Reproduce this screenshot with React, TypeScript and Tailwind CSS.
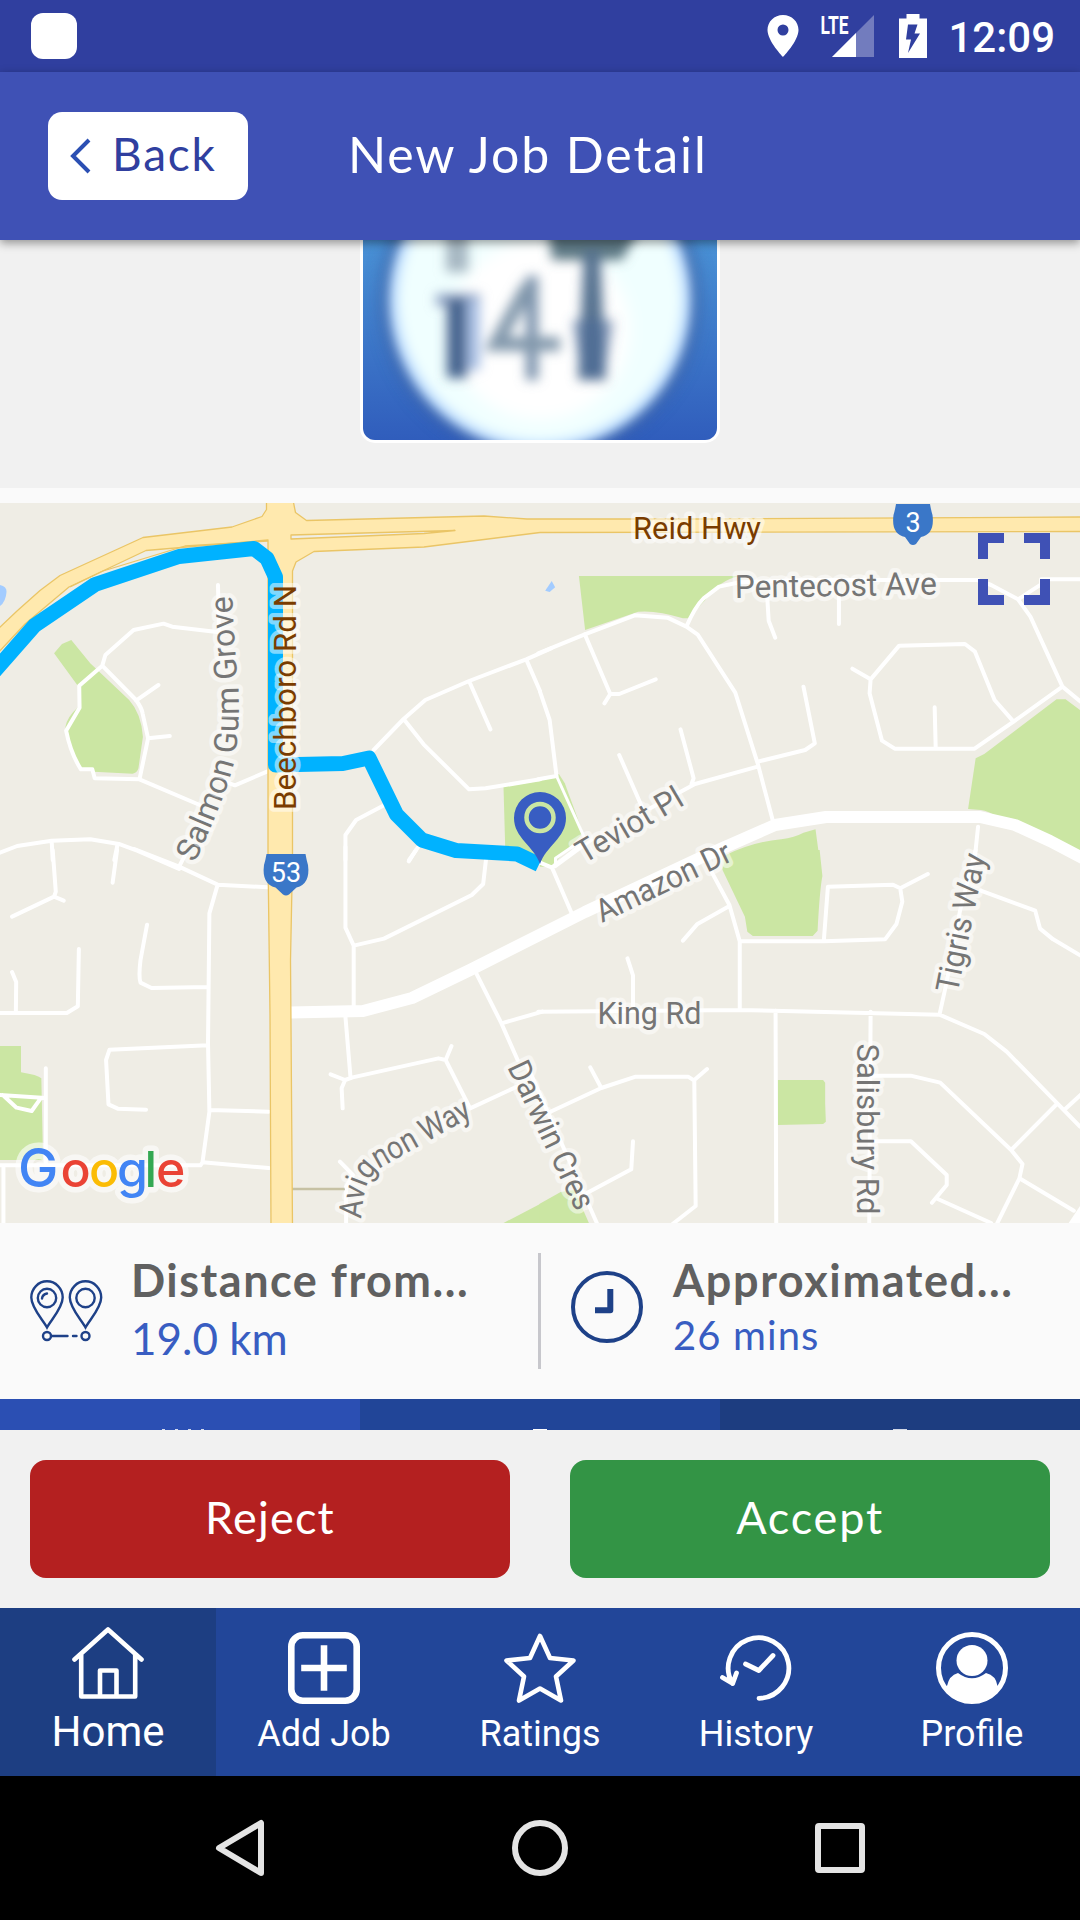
import React from "react";

const GREEN = "#cbe6a3";

function StatusBar() {
  return (
    <div className="flex h-[72px] items-center bg-[#303f9f] pl-[31px] pr-[25px]">
      <div className="h-[46px] w-[46px] rounded-[12px] bg-white" />
      <div className="ml-auto flex items-center">
        <svg width="32" height="42" viewBox="0 0 32 42" className="mr-[21px]">
          <path
            fill="#fff"
            fillRule="evenodd"
            d="M16 0C7.2 0 0.5 6.700 0.500 15C.500 26 16 42 16 42S31.500 26 31.500 15C31.500 6.700 24.800 0 16 0ZM16 9.500A5.500 5.500 0 1 1 16 20.500A5.500 5.500 0 1 1 16 9.500Z"
          />
        </svg>
        <svg width="54" height="44" viewBox="820 14 54 44" className="mr-[25px] overflow-visible">
          <path d="M874 15V57H832Z" fill="#fff" fillOpacity=".32" />
          <path d="M856 33V57H832Z" fill="#fff" />
          <path d="M820 14H849V36H820Z" fill="#303f9f" />
          <text x="820.5" y="34" fontFamily="Roboto" fontWeight="700" fontSize="26.500" textLength="28" lengthAdjust="spacingAndGlyphs" fill="#fff">
            LTE
          </text>
        </svg>
        <svg width="28" height="44" viewBox="0 0 28 44" className="mr-[21px]">
          <path d="M7.500 0H20.500V4.500H28V44H0V4.500H7.500Z" fill="#fff" />
          <path d="M18.500 10.500L9 10.500L7 25.500H12L9 39L21 19.500H15.500Z" fill="#303f9f" />
        </svg>
        <span className="pt-[4px] font-[Roboto] text-[42px] font-medium leading-[48px] text-white">12:09</span>
      </div>
    </div>
  );
}

function Header() {
  return (
    <header className="relative z-10 flex h-[168px] items-center bg-[#3f51b5] pl-[48px] shadow-[0_3px_9px_rgba(0,0,0,0.4)]">
      <button className="flex h-[88px] w-[200px] items-center rounded-[14px] bg-white pl-[22px] font-[Lato]">
        <svg width="22" height="38" viewBox="0 0 22 38">
          <path d="M19 3L3 19L19 35" fill="none" stroke="#2b4fb3" strokeWidth="4" />
        </svg>
        <span className="-mt-[4px] ml-[20px] text-[46px] leading-[60px] tracking-[1.800px] text-[#303f9f]">Back</span>
      </button>
      <h1 className="-mt-[4px] ml-[100px] whitespace-nowrap font-[Lato] text-[50px] leading-[60px] tracking-[1.900px] text-white">
        New Job Detail
      </h1>
    </header>
  );
}

function JobPhoto() {
  return (
    <div className="flex h-[248px] justify-center bg-[#f1f1f1]">
      <div className="h-[203px] w-[360px] overflow-hidden rounded-b-[15px] border-x-[3px] border-b-[3px] border-white">
        <svg width="354" height="200" viewBox="363 240 354 200">
          <defs>
            <linearGradient id="sky" x1="0" y1="0" x2="0" y2="1">
              <stop offset="0" stopColor="#4a92d6" />
              <stop offset="1" stopColor="#305dbc" />
            </linearGradient>
            <filter id="soft" x="-20%" y="-20%" width="140%" height="140%">
              <feGaussianBlur stdDeviation="6" />
            </filter>
            <filter id="edge" x="-20%" y="-20%" width="140%" height="140%">
              <feGaussianBlur stdDeviation="8" />
            </filter>
          </defs>
          <rect x="363" y="240" width="354" height="200" fill="url(#sky)" />
          <circle cx="540" cy="298" r="160" fill="#3d62a2" opacity=".7" filter="url(#edge)" />
          <circle cx="540" cy="300" r="151" fill="#bcdcff" filter="url(#soft)" />
          <circle cx="540" cy="300" r="142" fill="#f0ffff" filter="url(#soft)" />
          <circle cx="540" cy="330" r="90" fill="#ffffff" filter="url(#edge)" />
          <g filter="url(#soft)">
            <path d="M446 225H468V272H446Z" fill="#93a5b3" opacity=".8" />
            <path d="M436 294H480V306H436Z" fill="#8fa3c4" />
            <path d="M447 298H467V378H447Z" fill="#45638e" />
            <path d="M467 300H480V370H467Z" fill="#a9c0e4" />
            <path d="M532 276V380" stroke="#7890aa" strokeWidth="12" />
            <path d="M528 286L496 344H560" stroke="#8298ac" strokeWidth="14" fill="none" />
            <path d="M548 228H640L622 260H552Z" fill="#5d7884" />
            <path d="M584 250H600L606 380H578Z" fill="#54718f" />
            <path d="M572 320H614L604 378H582Z" fill="#4d6b97" opacity=".6" />
          </g>
        </svg>
      </div>
    </div>
  );
}

function Shield({ x, y, w, h, label }: { x: number; y: number; w: number; h: number; label: string }) {
  return (
    <g transform={`translate(${x} ${y})`}>
      <path
        d={`M3 0H${w - 3}Q${w - 2} 6 ${w - 0.5} 11Q${w + 2} 30 ${w - 12} ${h - 8}L${w / 2 + 3} ${h - 1}Q${w / 2} ${h + 1} ${w / 2 - 3} ${h - 1}L12 ${h - 8}Q-2 30 .5 11Q2 6 3 0Z`}
        fill="#3a77c8"
      />
      <text x={w / 2} y="27.500" textAnchor="middle" fontSize="27" fontFamily="Roboto" fill="#fff">
        {label}
      </text>
    </g>
  );
}

type LabelProps = { x: number; y: number; angle?: number; length: number; brown?: boolean; children: string };

function StreetLabel({ x, y, angle = 0, length, brown, children }: LabelProps) {
  return (
    <text
      transform={`translate(${x} ${y}) rotate(${angle})`}
      textLength={length}
      lengthAdjust="spacingAndGlyphs"
      fill={brown ? "#7a3c00" : "#757575"}
      stroke="#fff"
      strokeOpacity=".5"
      strokeWidth="9"
      strokeLinejoin="round"
      paintOrder="stroke"
    >
      {children}
    </text>
  );
}

function GoogleMark() {
  return (
    <g fontFamily="Inter" fontWeight="500" fontSize="50">
      <text y="1187" fill="#fff" stroke="#fff" strokeWidth="11" strokeLinejoin="round" opacity=".6">
        <tspan x="18" fontSize="54">G</tspan>
        <tspan x="60.500">o</tspan>
        <tspan x="89">o</tspan>
        <tspan x="117">g</tspan>
        <tspan x="144.500">l</tspan>
        <tspan x="156">e</tspan>
      </text>
      <text y="1187">
        <tspan x="18" fontSize="54" fill="#4285f4">G</tspan>
        <tspan x="60.500" fill="#ea4335">o</tspan>
        <tspan x="89" fill="#fbbc05">o</tspan>
        <tspan x="117" fill="#4285f4">g</tspan>
        <tspan x="144.500" fill="#34a853">l</tspan>
        <tspan x="156" fill="#ea4335">e</tspan>
      </text>
    </g>
  );
}

function JobMap() {
  return (
    <svg className="block" width="1080" height="720" viewBox="0 503 1080 720" fontFamily="Roboto" fontSize="32">
      <defs>
        <path id="salmon" d="M195 863C209 832 228 790 235 758C239 735 240 700 237 672C235 650 233 620 232 580" />
        <path id="avignon" d="M361 1219C364 1190 366 1176 382 1167L484 1110" />
      </defs>
      <rect x="0" y="503" width="1080" height="720" fill="#efede5" />

      <g transform="translate(0 490) scale(.34439 .33333)" fill={GREEN}>
        <path d="M157 490L180 462L207 450L262 520L375 630Q410 670 415 740L402 835Q398 850 385 851L272 845L268 838H232Q190 740 190 710Q195 680 228 650V590Z" />
        <path d="M1462 890L1568 872V1110H1468Z" />
        <path d="M0 285Q20 290 19 305Q17 335 0 348Z" fill="#a3ccff" />
      </g>
      <g transform="translate(540 490) scale(.34439 .33333)" fill={GREEN}>
        <path d="M113 258H580Q520 270 480 330L430 385H415Q340 360 285 365L131 420Z" />
        <path d="M0 870L55 852L72 880L125 1030L30 1130H0Z" />
        <path d="M1243 957L1265 805L1290 792L1500 628H1526L1575 665V1095L1480 1045L1340 990Q1300 960 1280 960Z" />
        <path d="M540 1095Q620 1055 700 1048Q740 1042 765 1028L800 1018L812 1110H540Z" />
        <path d="M15 302L34 273L44 292L28 306Z" fill="#a3ccff" />
      </g>
      <g transform="translate(0 850) scale(.34439 .33333)" fill={GREEN}>
        <path d="M0 588H61V667Q110 675 120 685L125 930H0Z" />
        <path d="M1462 1119L1568 1062L1570 1119Z" />
      </g>
      <g transform="translate(540 850) scale(.34439 .33333)" fill={GREEN}>
        <path d="M530 20L590 0H812L820 78Q812 120 806 242L792 258H618L602 245L595 200L530 60Z" />
        <path d="M690 690H822L828 698V760L830 815L822 822L690 825Z" />
        <path d="M-2 1062L60 1026L100 1020L142 1119H-2Z" />
      </g>

      <g fill="none" stroke="#fff" strokeWidth="4" strokeLinecap="round" strokeLinejoin="round">
        <g transform="translate(0 490) scale(.34439 .33333)">
          <path vectorEffect="non-scaling-stroke" d="M633 285L636 427L500 410L475 401L388 420L306 495L297 527L230 587L231 653L192 722Q205 790 235 838H268L275 865L405 868L580 945M297 527L395 630Q412 655 414 670L430 745L405 868M395 632L460 585M430 745L493 738M640 870L682 886L775 845" />
          <path vectorEffect="non-scaling-stroke" d="M-10 1092L50 1068L150 1052L262 1048L345 1062L400 1083L520 1137M150 1052L153 1110M341 1065L332 1110" />
          <path vectorEffect="non-scaling-stroke" d="M1085 780L1172 687L1235 630L1362 573L1528 508L1600 475M1362 573L1424 718M1172 687L1230 763L1362 898L1410 895L1568 868M1528 508L1568 603M1115 946L1034 990L1003 1035V1110M1215 1070L1188 1110" />
        </g>
        <g transform="translate(540 490) scale(.34439 .33333)">
          <path vectorEffect="non-scaling-stroke" d="M-5 490L130 433L275 376L370 383L425 410L458 434L567 608L632 820L678 1000M425 410Q450 350 475 325L520 290L580 277L780 270H1270L1310 285L1388 328L1455 283V268H1575M1388 328L1424 380L1517 590L1375 695L1262 776H1030L993 752L957 610L960 568L1043 467L1234 462L1263 485L1320 630L1375 695M1517 590L1570 635M960 568L907 536M1146 652L1149 775" />
          <path vectorEffect="non-scaling-stroke" d="M130 433L204 612H230L336 568M204 612L187 640M0 605L28 690L48 858L-5 868M660 325L664 392L683 443M868 310V402M765 590L798 760L770 780L632 815M632 830L450 882L320 955M408 718L446 865L440 882M230 795L300 960M1272 1010L1262 1110" />
          <path vectorEffect="non-scaling-stroke" strokeWidth="3" d="M48 858L130 1045L45 1105V1130L150 1050" />
        </g>
        <g transform="translate(0 850) scale(.34439 .33333)">
          <path vectorEffect="non-scaling-stroke" d="M390 -3L520 50L632 104L777 112M520 50L540 10M153 0L162 125L157 140L35 200M157 140L185 152M340 0L327 98M632 104L608 190L604 580L608 785L588 937L582 946H0M588 937L780 954M10 946V1125M608 780L780 785M604 586L318 599L308 630L315 763L342 776L424 779M604 411L440 414L408 398Q402 380 408 330L427 224M-5 489H194L226 469L229 297M46 489L47 396L35 366M133 655V940M0 735L132 744M8 735L48 773L92 783L118 745" />
          <path vectorEffect="non-scaling-stroke" d="M1003 -10V233L1027 287L1115 266L1370 135L1403 102L1411 30M1027 287V470M1208 0L1187 34M1383 370L1456 520L1503 630M1456 520L1575 485M1003 500L1018 685M960 673L1002 690L1024 682L1273 625L1294 630L1365 775L1505 708M1294 630L1311 588M1002 690L992 715L995 775M987 935L1025 975L1005 1010V1125" />
        </g>
        <g transform="translate(540 850) scale(.34439 .33333)">
          <path vectorEffect="non-scaling-stroke" d="M0 38L35 53L92 190M35 53L120 -15M490 50L550 165L580 274V480M550 168L456 223L415 272M580 274H824L1002 268L1035 222L1052 155L1046 115L1126 72M1046 115L1025 104L836 110L824 274M254 325L270 376V480M-5 485L580 480L1160 494L1290 552L1355 605L1568 830M1160 494L1180 400L1220 180L1265 0M1280 122L1438 182L1452 236L1490 268L1575 320M684 482L686 1125M960 485L956 1125M960 677H1076L1162 698L1368 900L1401 942L1392 985L1328 1119M1368 900L1498 765M1522 780L1575 730M1392 985L1550 1082M960 874H1077L1181 975V1005L1138 1058M1155 1047L1310 1119" />
          <path vectorEffect="non-scaling-stroke" d="M10 795L178 714L278 680H430L448 692L452 1068L385 1122M448 690L485 657M178 714L146 652M270 874L265 958L120 1038M-40 640L165 1119" />
        </g>
      </g>

      <path d="M292 1189H345" stroke="#c6c1a3" strokeWidth="2.500" />
      <path
        d="M290 1012.500L363 1011L412 998L470 970L585 912L700 858L775 825L826 817H980L1015 825L1050 841L1090 862"
        fill="none"
        stroke="#fff"
        strokeWidth="12"
        strokeLinejoin="round"
      />
      <path d="M1068 1224L1080 1206V1224Z" fill="#fff" />

      <g fill="#ffe9ae" stroke="#eac566" strokeWidth="1.300" strokeLinejoin="round">
        <path d="M-3 630L17 611L40 590.500L60 575.500L143 537.500L232 527L262 516.500L266.500 509.500V500H293L295.500 512.500L306.500 520.500L484 516L527 519H700L1083 517V531.500L540 532.500L484 539.500L424 547L314 551.500L296 562L292.500 571L292.500 860L290.500 960L292.500 1226H271L270 1015L268 860V540L146 550.500L69 587L25 624L-3 654Z" />
        <path d="M291 535L455 530.500L424 533.500L291 539Z" fill="#efede5" />
        <path d="M268 541L185 546L103 571L70 587" fill="none" />
      </g>

      <path
        d="M-8 674L34.500 625.500L95 584.500L179 556.500L254 548.500L267 558.500L275.500 577V765L343 763.500L369 758L396.500 814.500L422 840L456 850.500L517 854L539 864.500"
        fill="none"
        stroke="#00b2ff"
        strokeWidth="15"
        strokeLinejoin="round"
      />

      <StreetLabel x={633} y={539} length={128} brown>Reid Hwy</StreetLabel>
      <StreetLabel x={735} y={598} angle={-1} length={202}>Pentecost Ave</StreetLabel>
      <StreetLabel x={296} y={810} angle={-90} length={225} brown>Beechboro Rd N</StreetLabel>
      <StreetLabel x={584} y={864} angle={-30.5} length={118}>Teviot Pl</StreetLabel>
      <StreetLabel x={602} y={923} angle={-25.5} length={146}>Amazon Dr</StreetLabel>
      <StreetLabel x={597.5} y={1024} length={104}>King Rd</StreetLabel>
      <StreetLabel x={957.5} y={994} angle={-78.5} length={141}>Tigris Way</StreetLabel>
      <StreetLabel x={857} y={1043.500} angle={90} length={171}>Salisbury Rd</StreetLabel>
      <StreetLabel x={507} y={1067} angle={64.5} length={161}>Darwin Cres</StreetLabel>
      <g fill="#757575" stroke="#fff" strokeOpacity=".5" strokeWidth="9" strokeLinejoin="round" paintOrder="stroke">
        <text>
          <textPath href="#salmon" textLength="275" lengthAdjust="spacingAndGlyphs">Salmon Gum Grove</textPath>
        </text>
        <text>
          <textPath href="#avignon" textLength="163" lengthAdjust="spacingAndGlyphs">Avignon Way</textPath>
        </text>
      </g>

      <Shield x={893} y={504} w={40} h={41} label="3" />
      <Shield x={263.500} y={854} w={45} h={41.500} label="53" />

      <path d="M540 864C534 846 514 838 514 818A26 26 0 0 1 566 818C566 838 546 846 540 864Z" fill="#385dc2" />
      <circle cx="540" cy="817.500" r="13.500" fill="none" stroke="#cbe6a3" strokeWidth="4.500" />

      <path
        d="M978 533H1004V543H988V559H978ZM1050 533H1024V543H1040V559H1050ZM978 605H1004V595H988V579H978ZM1050 605H1024V595H1040V579H1050Z"
        fill="#3f51b5"
      />
      <GoogleMark />
    </svg>
  );
}

function TripInfo() {
  return (
    <section className="flex h-[176px] bg-[#fafafa] py-[30px] font-[Lato]">
      <div className="flex w-[538px] pl-[30px]">
        <svg className="mt-[27px]" width="73" height="62" viewBox="0 0 73 62" fill="none" stroke="#1e4188" strokeWidth="2.400" strokeLinecap="round">
          <path d="M17 47.500C13 40 1.300 28 1.300 17.500A15.700 16.200 0 0 1 32.700 17.500C32.700 28 21 40 17 47.500Z" />
          <path d="M55.500 47.500C51.500 40 39.800 28 39.800 17.500A15.700 16.200 0 0 1 71.200 17.500C71.200 28 59.500 40 55.500 47.500Z" />
          <circle cx="17" cy="18" r="9.200" />
          <circle cx="55.500" cy="18" r="9.200" />
          <path d="M12 18.500Q12.500 14.500 17 13.500" />
          <circle cx="17" cy="56" r="4" />
          <circle cx="55.500" cy="56" r="4" />
          <path d="M21 56H37.500M43 56H46.500" />
        </svg>
        <div className="ml-[28px]">
          <p className="whitespace-nowrap text-[45px] font-bold leading-[54px] tracking-[1.500px] text-[#606060]">Distance from...</p>
          <p className="mt-[3px] text-[44px] leading-[56px] text-[#385dc2]">19.0 km</p>
        </div>
      </div>
      <div className="w-[3px] bg-[#c7c7cc]" />
      <div className="flex pl-[30px]">
        <svg className="mt-[18px]" width="72" height="72" viewBox="0 0 72 72">
          <circle cx="36" cy="36" r="34" fill="none" stroke="#1e4188" strokeWidth="4" />
          <path d="M39.300 21V39.300H27" fill="none" stroke="#1e4188" strokeWidth="6" strokeLinecap="square" strokeLinejoin="round" />
        </svg>
        <div className="ml-[30px]">
          <p className="whitespace-nowrap text-[45px] font-bold leading-[54px] tracking-[1.600px] text-[#606060]">Approximated...</p>
          <p className="text-[40px] leading-[56px] tracking-[1.100px] text-[#385dc2]">26 mins</p>
        </div>
      </div>
    </section>
  );
}

function DetailTabs() {
  return (
    <div className="grid h-[31px] grid-cols-3">
      <div className="flex items-end justify-center gap-[10px] bg-[#2b4fb3] pl-[6px]">
        <i className="h-px w-[3px] bg-white/80" />
        <i className="h-px w-[3px] bg-white/80" />
        <i className="h-px w-[3px] bg-white/80" />
        <i className="h-px w-[3px] bg-white/80" />
      </div>
      <div className="flex items-end justify-center bg-[#214598]">
        <i className="h-px w-[14px] bg-white" />
      </div>
      <div className="flex items-end justify-center bg-[#1d3d80]">
        <i className="h-px w-[14px] bg-white/80" />
      </div>
    </div>
  );
}

function Actions() {
  return (
    <div className="grid h-[178px] grid-cols-2 gap-[60px] bg-[#f1f1f1] p-[30px] font-[Lato] text-[45px] leading-[56px] text-white">
      <button className="rounded-[16px] bg-[#b42020] pb-[4px] tracking-[1.200px]">Reject</button>
      <button className="rounded-[16px] bg-[#339445] pb-[4px] tracking-[1.800px]">Accept</button>
    </div>
  );
}

function BottomNav() {
  return (
    <nav className="grid h-[168px] grid-cols-5 bg-[#224699] font-[Roboto] text-[36px] leading-[44px] text-white">
      <div className="flex flex-col items-center bg-[#1d3e82] pt-[19px]">
        <svg width="72" height="72" viewBox="0 0 72 72" fill="none" stroke="#fff" strokeWidth="4.600" strokeLinecap="round" strokeLinejoin="round">
          <path d="M2.500 32.500L36 2.500L69.500 32.500M9.200 28V69.500H63.200V28M28 68V43.500H44.500V68" />
        </svg>
        <span className="mt-[8px] text-[42px] leading-[50px]">Home</span>
      </div>
      <div className="flex flex-col items-center pt-[24px]">
        <svg width="72" height="72" viewBox="0 0 72 72" fill="none" stroke="#fff" strokeWidth="6.600" strokeLinecap="square">
          <rect x="3.300" y="3.300" width="65.400" height="65.400" rx="11.500" />
          <path d="M16.500 36H55.500M36 16.500V55.500" />
        </svg>
        <span className="mt-[8px]">Add Job</span>
      </div>
      <div className="flex flex-col items-center pt-[24px]">
        <svg width="72" height="72" viewBox="0 0 72 72" fill="none" stroke="#fff" strokeWidth="4.600" strokeLinejoin="round">
          <path d="M36 4L46 26L69.500 28.500L52 44.500L57 68.500L36 56.500L15 68.500L20 44.500L2.500 28.500L26 26Z" />
        </svg>
        <span className="mt-[8px]">Ratings</span>
      </div>
      <div className="flex flex-col items-center pt-[24px]">
        <svg width="72" height="72" viewBox="0 0 72 72" fill="none" stroke="#fff" strokeWidth="4.800" strokeLinecap="round" strokeLinejoin="round">
          <path d="M39 66.300A30.300 30.300 0 1 0 12.500 51.500M2.500 45.500L12.700 51.500L16.500 41M25.500 32L38.800 38.500L53 23.500" />
        </svg>
        <span className="mt-[8px]">History</span>
      </div>
      <div className="flex flex-col items-center pt-[24px]">
        <svg width="72" height="72" viewBox="0 0 72 72">
          <circle cx="36" cy="36" r="33.500" fill="none" stroke="#fff" strokeWidth="5" />
          <circle cx="36" cy="28.500" r="15.500" fill="#fff" />
          <path d="M22 41Q36 51.500 50 41Q60 43.500 61.500 54H66Q56 71 36 71Q16 71 6 54H11Q13 43.500 22 41Z" fill="#fff" />
        </svg>
        <span className="mt-[8px]">Profile</span>
      </div>
    </nav>
  );
}

function SystemNav() {
  return (
    <div className="flex h-[144px] items-center justify-between bg-black pl-[214px] pr-[215px]">
      <svg width="50" height="58" viewBox="0 0 50 58">
        <path d="M47 4V54L5 29Z" fill="none" stroke="#e4e4e4" strokeWidth="6" strokeLinejoin="round" />
      </svg>
      <svg width="56" height="56" viewBox="0 0 56 56">
        <circle cx="28" cy="28" r="25" fill="none" stroke="#e4e4e4" strokeWidth="6" />
      </svg>
      <svg width="50" height="50" viewBox="0 0 50 50">
        <rect x="3" y="3" width="44" height="44" rx="1" fill="none" stroke="#e4e4e4" strokeWidth="6" />
      </svg>
    </div>
  );
}

export default function App() {
  return (
    <div className="h-[1920px] w-[1080px] overflow-hidden bg-[#fafafa]">
      <StatusBar />
      <Header />
      <JobPhoto />
      <div className="h-[15px] bg-[#fafafa]" />
      <JobMap />
      <TripInfo />
      <DetailTabs />
      <Actions />
      <BottomNav />
      <SystemNav />
    </div>
  );
}
